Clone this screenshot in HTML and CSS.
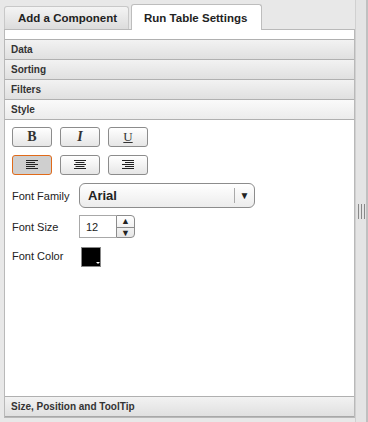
FILE: index.html
```html
<!DOCTYPE html>
<html lang="en">

<head>
    <meta charset="UTF-8">
    <title>Run Table Settings</title>
    <link rel="stylesheet" href="styles.css">
</head>

<body>
    <div class="layout">
        <div class="main">
            <div class="tabs">
                <div class="tab">Add a Component</div>
                <div class="tab active">Run Table Settings</div>
            </div>
            <div class="panel">
                <div class="section">Data</div>
                <div class="section">Sorting</div>
                <div class="section">Filters</div>
                <div class="section open">Style</div>
                <div class="style-body">
                    <div class="btn-row">
                        <button class="btn bold">B</button>
                        <button class="btn italic">I</button>
                        <button class="btn under">U</button>
                    </div>
                    <div class="btn-row">
                        <button class="btn selected">
                            <svg width="12" height="10" viewBox="0 0 12 10"><path d="M0 .5h12M0 2.5h9M0 4.5h12M0 6.5h9M0 8.5h12" stroke="#222" stroke-width="1"/></svg>
                        </button>
                        <button class="btn">
                            <svg width="12" height="10" viewBox="0 0 12 10"><path d="M0 .5h12M1.5 2.5h9M0 4.5h12M1.5 6.5h9M0 8.5h12" stroke="#222" stroke-width="1"/></svg>
                        </button>
                        <button class="btn">
                            <svg width="12" height="10" viewBox="0 0 12 10"><path d="M0 .5h12M3 2.5h9M0 4.5h12M3 6.5h9M0 8.5h12" stroke="#222" stroke-width="1"/></svg>
                        </button>
                    </div>
                    <div class="field">
                        <label>Font Family</label>
                        <div class="select">
                            <span class="select-value">Arial</span>
                            <span class="select-arrow">&#9660;</span>
                        </div>
                    </div>
                    <div class="field">
                        <label>Font Size</label>
                        <div class="spinner">
                            <div class="spin-value">12</div>
                            <div class="spin-btns">
                                <span>&#9650;</span>
                                <span>&#9660;</span>
                            </div>
                        </div>
                    </div>
                    <div class="field">
                        <label>Font Color</label>
                        <div class="swatch"></div>
                    </div>
                </div>
                <div class="section footer">Size, Position and ToolTip</div>
            </div>
        </div>
        <div class="splitter">
            <div class="grip"></div>
        </div>
    </div>
</body>

</html>
```

FILE: styles.css
```css
body {
    margin: 0;
    font-family: Arial, "Liberation Sans", sans-serif;
    background-color: #e8e8e8;
    color: #222;
}

.layout {
    display: flex;
    height: 422px;
}

.main {
    width: 353px;
    padding: 4px 0 0 4px;
    display: flex;
    flex-direction: column;
}

.tabs {
    display: flex;
    align-items: flex-end;
    gap: 2px;
    height: 25px;
    position: relative;
    z-index: 1;
}

.tab {
    height: 22px;
    line-height: 22px;
    padding: 0 11px 0 13px;
    font-size: 11.5px;
    font-weight: bold;
    color: #222;
    border: 1px solid #c8c8c8;
    border-bottom: none;
    border-radius: 3px 3px 0 0;
    background: linear-gradient(#f4f4f4, #dcdcdc);
}

.tab.active {
    height: 25px;
    line-height: 27px;
    padding: 0 14px 0 12px;
    background: #fff;
    border-color: #bdbdbd;
    margin-bottom: -1px;
}

.panel {
    flex: 1;
    margin-bottom: 4px;
    border: 1px solid #b9b9b9;
    background: #fff;
    padding-top: 9px;
    display: flex;
    flex-direction: column;
}

.section {
    height: 19px;
    line-height: 19px;
    padding-left: 6px;
    font-size: 10px;
    font-weight: bold;
    color: #333;
    background: linear-gradient(#f2f2f2, #e0e0e0);
    border-top: 1px solid #b0b0b0;
}

.section.open {
    background: linear-gradient(#fafafa, #ececec);
    border-bottom: 1px solid #b0b0b0;
}

.section.footer {
    margin-top: auto;
    border-bottom: 1px solid #a8a8a8;
}

.style-body {
    padding: 7px 0 0 7px;
}

.btn-row {
    display: flex;
    gap: 8px;
    margin-bottom: 8px;
}

.btn {
    width: 40px;
    height: 20px;
    padding: 0;
    border: 1px solid #8c8c8c;
    border-radius: 3px;
    background: linear-gradient(#ffffff, #e6e6e6);
    font-family: "Liberation Serif", serif;
    font-size: 14px;
    color: #333;
    display: flex;
    align-items: center;
    justify-content: center;
}

.btn.bold {
    font-weight: bold;
}

.btn.italic {
    font-style: italic;
    font-weight: bold;
}

.btn.under {
    text-decoration: underline;
    font-size: 13px;
}

.btn.selected {
    background: #cfcfcf;
    border-color: #e06a1a;
}

.field {
    display: flex;
    align-items: center;
    margin-bottom: 7px;
}

.field label {
    width: 67px;
    font-size: 11px;
    color: #222;
}

.select {
    width: 174px;
    height: 23px;
    border: 1px solid #8c8c8c;
    border-radius: 6px;
    background: linear-gradient(#ffffff, #ececec);
    display: flex;
    align-items: center;
}

.select-value {
    flex: 1;
    padding-left: 8px;
    font-size: 13px;
    font-weight: bold;
}

.select-arrow {
    width: 19px;
    height: 15px;
    line-height: 15px;
    border-left: 1px solid #aaa;
    font-size: 10px;
    text-align: center;
}

.spinner {
    display: flex;
    height: 23px;
}

.spin-value {
    width: 30px;
    padding-left: 6px;
    line-height: 23px;
    font-size: 11px;
    border: 1px solid #a8a8a8;
    border-right: none;
}

.spin-btns {
    width: 17px;
    border: 1px solid #8c8c8c;
    border-radius: 0 4px 4px 0;
    display: flex;
    flex-direction: column;
    background: linear-gradient(#fff, #e6e6e6);
}

.spin-btns span {
    flex: 1;
    font-size: 9px;
    line-height: 11px;
    text-align: center;
}

.spin-btns span + span {
    border-top: 1px solid #8c8c8c;
}

.swatch {
    width: 18px;
    height: 18px;
    margin-left: 2px;
    margin-top: 2px;
    background: #000;
    border: 1px solid #888;
    position: relative;
}

.swatch::after {
    content: "";
    position: absolute;
    right: 0;
    bottom: 0;
    border: 2px solid transparent;
    border-top-color: #fff;
}

.splitter {
    width: 10px;
    margin-left: 0;
    background: #e4e4e4;
    border-left: 1px solid #d0d0d0;
    border-right: 2px solid #c0c0c0;
    display: flex;
    align-items: center;
    justify-content: center;
}

.grip {
    width: 5px;
    height: 15px;
    border-left: 1px solid #888;
    border-right: 1px solid #888;
    background: linear-gradient(90deg, transparent 2px, #888 2px, #888 3px, transparent 3px);
}
```
